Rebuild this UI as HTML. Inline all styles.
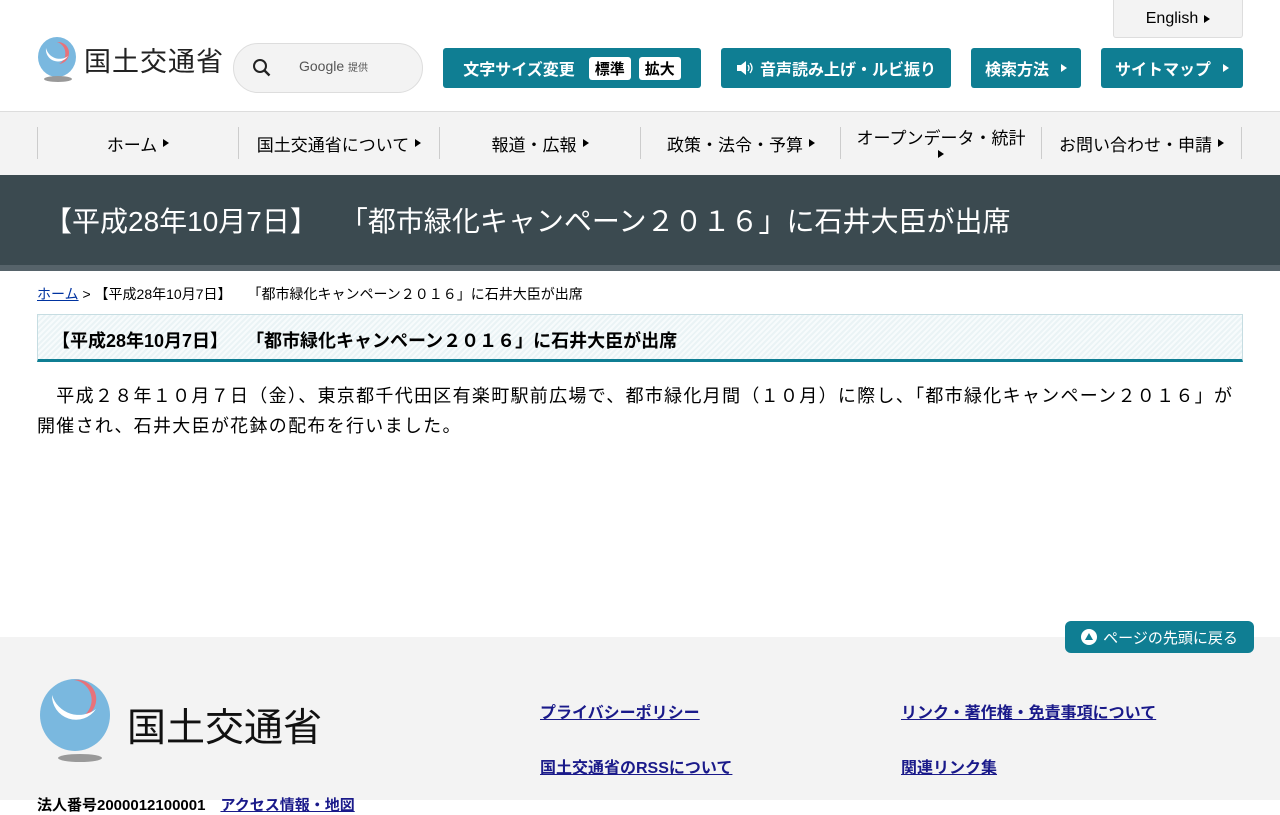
<!DOCTYPE html>
<html><head><meta charset="utf-8"><style>
*{margin:0;padding:0;box-sizing:border-box}
body{width:1280px;height:800px;overflow:hidden;background:#fff;font-family:"Liberation Sans","Noto Sans CJK JP",sans-serif;color:#000;position:relative}
.abs{position:absolute}
.btn{position:absolute;top:48px;height:40px;background:#0f7e93;color:#fff;border-radius:3px;font-size:16px;font-weight:bold;display:flex;align-items:center;justify-content:center;gap:6px}
.tri{display:inline-block;width:0;height:0;border-left:6px solid currentColor;border-top:4.5px solid transparent;border-bottom:4.5px solid transparent;margin-left:6px}
.wb{background:#fff;color:#000;border-radius:3px;padding:1px 6px;font-size:15px;margin-left:8px}
.nav{position:absolute;top:111px;left:0;width:1280px;height:64px;background:#f3f3f3;border-top:1px solid #ddd}
.ni{position:absolute;top:15px;height:32px;border-left:1px solid #ccc;font-size:17px;display:flex;align-items:center;justify-content:center;width:201px}
a{color:#0033a0}
.sp{display:inline-block}
</style></head><body>
<svg class="abs" style="left:36px;top:36px" width="44" height="46" viewBox="0 0 44 46">
<ellipse cx="21" cy="21" rx="19" ry="20" fill="#7ab8df"/>
<path d="M21 6a12 12 0 0 1 2 22 8 8 0 0 0-2-22z" fill="#e8727a"/>
<path d="M10 12a12 12 0 0 0 22 8a14 14 0 0 1-22-8z" fill="#fff"/>
<ellipse cx="22" cy="43" rx="14" ry="3" fill="#999"/>
</svg>
<div class="abs" style="left:84px;top:40px;font-size:27px;color:#222;letter-spacing:1px">国土交通省</div>
<div class="abs" style="left:233px;top:43px;width:190px;height:50px;border:1px solid #ddd;border-radius:25px;background:#f3f3f3"></div>
<svg class="abs" style="left:252px;top:58px" width="20" height="20" viewBox="0 0 20 20"><circle cx="8" cy="8" r="6" fill="none" stroke="#222" stroke-width="2"/><path d="M12.5 12.5l5 5" stroke="#222" stroke-width="2.4"/></svg>
<div class="abs" style="left:299px;top:58px;font-size:14px;color:#555">Google <span style="font-size:10px">提供</span></div>
<div class="abs" style="left:1113px;top:0;width:130px;height:38px;background:#f3f3f3;border:1px solid #ddd;border-top:none;border-radius:0 0 3px 3px;font-size:16px;display:flex;align-items:center;justify-content:center">English<span class="tri"></span></div>
<div class="btn" style="left:443px;width:258px">文字サイズ変更<span class="wb">標準</span><span class="wb" style="margin-left:2px">拡大</span></div>
<div class="btn" style="left:721px;width:230px"><svg width="18" height="16" viewBox="0 0 18 16"><path d="M1 5h4l5-4v14l-5-4H1z" fill="#fff"/><path d="M12 5q2 3 0 6M14 3q4 5 0 10" stroke="#fff" fill="none" stroke-width="1.3"/></svg>音声読み上げ・ルビ振り</div>
<div class="btn" style="left:971px;width:110px">検索方法<span class="tri"></span></div>
<div class="btn" style="left:1101px;width:142px">サイトマップ<span class="tri"></span></div>
<div class="nav">
<div class="ni" style="left:37px">ホーム<span class="tri"></span></div>
<div class="ni" style="left:238px">国土交通省について<span class="tri"></span></div>
<div class="ni" style="left:439px">報道・広報<span class="tri"></span></div>
<div class="ni" style="left:640px">政策・法令・予算<span class="tri"></span></div>
<div class="ni" style="left:840px;flex-direction:column;line-height:22px">オープンデータ・統計<span class="tri" style="margin:0"></span></div>
<div class="ni" style="left:1041px;border-right:1px solid #ccc">お問い合わせ・申請<span class="tri"></span></div>
</div>
<div class="abs" style="left:0;top:175px;width:1280px;height:90px;background:#3b4a50"></div>
<div class="abs" style="left:0;top:265px;width:1280px;height:6px;background:#56636a"></div>
<div class="abs" style="left:44px;top:200px;font-size:28px;color:#fff;white-space:nowrap">【平成28年10月7日】<span class="sp" style="width:22px"></span>「都市緑化キャンペーン２０１６」に石井大臣が出席</div>
<div class="abs" style="left:37px;top:284px;font-size:14px;white-space:nowrap"><a href="#">ホーム</a> &gt; 【平成28年10月7日】<span class="sp" style="width:16px"></span>「都市緑化キャンペーン２０１６」に石井大臣が出席</div>
<div class="abs" style="left:37px;top:314px;width:1206px;height:48px;border:1px solid #c6dde2;border-bottom:3px solid #0f7e93;background:repeating-linear-gradient(135deg,#eaf3f5 0 2px,#f7fbfc 2px 4px)"></div>
<div class="abs" style="left:52px;top:327px;font-size:18px;font-weight:bold;white-space:nowrap">【平成28年10月7日】<span class="sp" style="width:18px"></span>「都市緑化キャンペーン２０１６」に石井大臣が出席</div>
<div class="abs" style="left:37px;top:381px;width:1206px;font-size:18px;line-height:30px;letter-spacing:1.3px">　平成２８年１０月７日（金）、東京都千代田区有楽町駅前広場で、都市緑化月間（１０月）に際し、「都市緑化キャンペーン２０１６」が<br>開催され、石井大臣が花鉢の配布を行いました。</div>
<div class="abs" style="left:0;top:637px;width:1280px;height:163px;background:#f3f3f3"></div>
<div class="abs" style="left:1065px;top:621px;width:189px;height:32px;background:#0f7e93;border-radius:6px;color:#fff;font-size:15px;display:flex;align-items:center;justify-content:center;gap:6px"><svg width="16" height="16" viewBox="0 0 16 16"><circle cx="8" cy="8" r="8" fill="#fff"/><path d="M8 4l4 7H4z" fill="#0f7e93"/></svg>ページの先頭に戻る</div>
<svg class="abs" style="left:38px;top:679px" width="76" height="86" viewBox="0 0 76 86">
<ellipse cx="37" cy="36" rx="35" ry="36" fill="#7ab8df"/>
<path d="M36 1a20 20 0 0 1 6 38a14 14 0 0 0-6-38z" fill="#e8727a"/>
<path d="M14 16a24 24 0 0 0 44 14a28 28 0 0 1-44-14z" fill="#fff"/>
<ellipse cx="42" cy="79" rx="22" ry="4" fill="#999"/>
</svg>
<div class="abs" style="left:127px;top:697px;font-size:39px;color:#111">国土交通省</div>
<div class="abs" style="left:540px;top:699px;font-size:16px;font-weight:bold"><a href="#" style="color:#1a1a8a">プライバシーポリシー</a></div>
<div class="abs" style="left:540px;top:754px;font-size:16px;font-weight:bold"><a href="#" style="color:#1a1a8a">国土交通省のRSSについて</a></div>
<div class="abs" style="left:901px;top:699px;font-size:16px;font-weight:bold"><a href="#" style="color:#1a1a8a">リンク・著作権・免責事項について</a></div>
<div class="abs" style="left:901px;top:754px;font-size:16px;font-weight:bold"><a href="#" style="color:#1a1a8a">関連リンク集</a></div>
<div class="abs" style="left:37px;top:794px;font-size:15px;font-weight:bold">法人番号2000012100001　<a href="#" style="color:#1a1a8a">アクセス情報・地図</a></div>
</body></html>
